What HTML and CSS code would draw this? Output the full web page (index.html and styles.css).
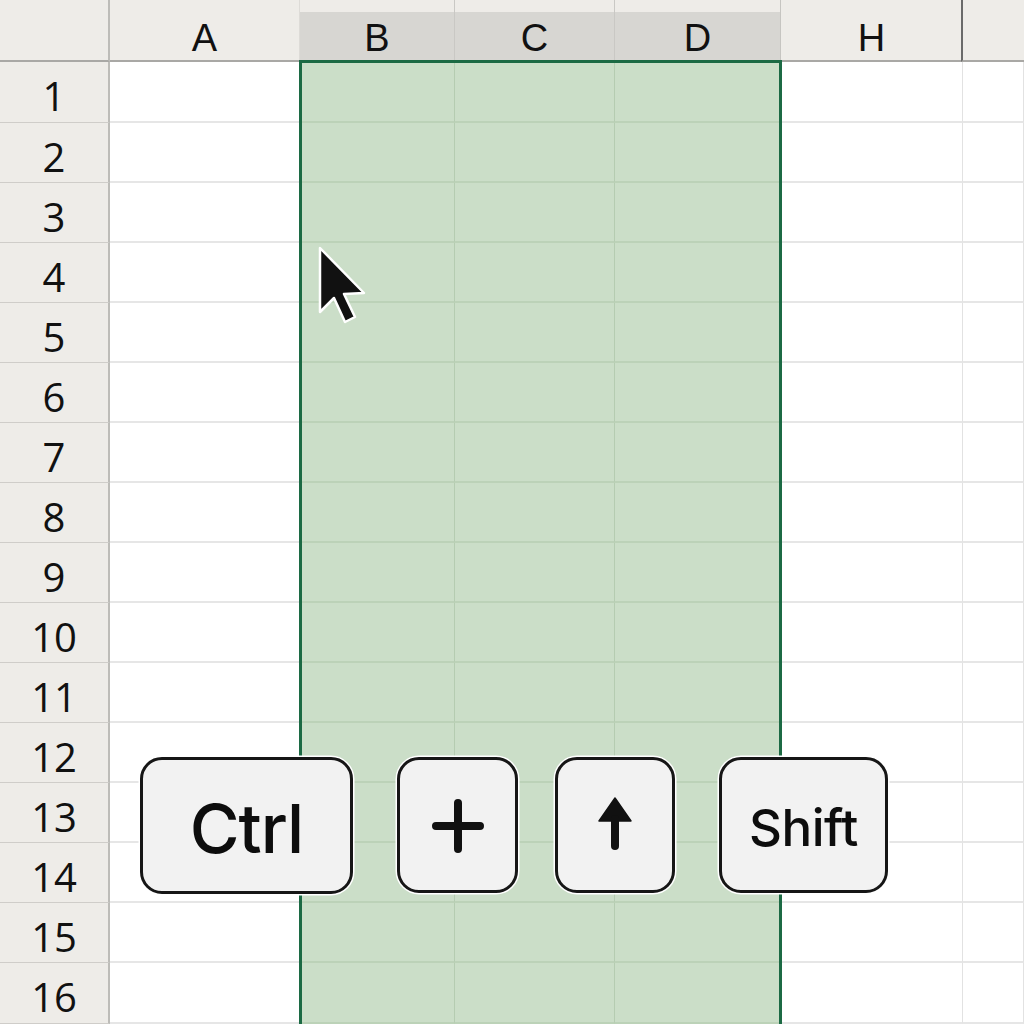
FILE: index.html
```html
<!DOCTYPE html>
<html>
<head>
<meta charset="utf-8">
<link rel="stylesheet" href="styles.css">
</head>
<body>
<div class="page">
  <div class="sheet">
    <div class="hd corner"></div>
    <div class="hd col">A</div>
    <div class="hd col sh">B</div>
    <div class="hd col sh">C</div>
    <div class="hd col sh last-sh">D</div>
    <div class="hd col">H</div>
    <div class="hd col dark"></div>

    <div class="rh first">1</div><div class="c first"></div><div class="c s first"></div><div class="c s first"></div><div class="c s first"></div><div class="c first"></div><div class="c first"></div>
    <div class="rh">2</div><div class="c"></div><div class="c s"></div><div class="c s"></div><div class="c s"></div><div class="c"></div><div class="c"></div>
    <div class="rh">3</div><div class="c"></div><div class="c s"></div><div class="c s"></div><div class="c s"></div><div class="c"></div><div class="c"></div>
    <div class="rh">4</div><div class="c"></div><div class="c s"></div><div class="c s"></div><div class="c s"></div><div class="c"></div><div class="c"></div>
    <div class="rh">5</div><div class="c"></div><div class="c s"></div><div class="c s"></div><div class="c s"></div><div class="c"></div><div class="c"></div>
    <div class="rh">6</div><div class="c"></div><div class="c s"></div><div class="c s"></div><div class="c s"></div><div class="c"></div><div class="c"></div>
    <div class="rh">7</div><div class="c"></div><div class="c s"></div><div class="c s"></div><div class="c s"></div><div class="c"></div><div class="c"></div>
    <div class="rh">8</div><div class="c"></div><div class="c s"></div><div class="c s"></div><div class="c s"></div><div class="c"></div><div class="c"></div>
    <div class="rh">9</div><div class="c"></div><div class="c s"></div><div class="c s"></div><div class="c s"></div><div class="c"></div><div class="c"></div>
    <div class="rh">10</div><div class="c"></div><div class="c s"></div><div class="c s"></div><div class="c s"></div><div class="c"></div><div class="c"></div>
    <div class="rh">11</div><div class="c"></div><div class="c s"></div><div class="c s"></div><div class="c s"></div><div class="c"></div><div class="c"></div>
    <div class="rh">12</div><div class="c"></div><div class="c s"></div><div class="c s"></div><div class="c s"></div><div class="c"></div><div class="c"></div>
    <div class="rh">13</div><div class="c"></div><div class="c s"></div><div class="c s"></div><div class="c s"></div><div class="c"></div><div class="c"></div>
    <div class="rh">14</div><div class="c"></div><div class="c s"></div><div class="c s"></div><div class="c s"></div><div class="c"></div><div class="c"></div>
    <div class="rh">15</div><div class="c"></div><div class="c s"></div><div class="c s"></div><div class="c s"></div><div class="c"></div><div class="c"></div>
    <div class="rh">16</div><div class="c"></div><div class="c s"></div><div class="c s"></div><div class="c s"></div><div class="c"></div><div class="c"></div>
  </div>

  <div class="selection"></div>

  <svg class="cursor" width="60" height="90" viewBox="0 0 60 90">
    <path d="M10 8 L10 72 L24 58 L35 82 L45 77 L34 54 L54 53 Z" fill="#111" stroke="#fff" stroke-width="2.5" stroke-linejoin="round"/>
  </svg>

  <div class="keys">
    <div class="key ctrl">Ctrl</div>
    <div class="key sq plus">
      <svg width="60" height="60" viewBox="0 0 60 60"><path d="M30 8 V54 M8 31 H52" stroke="#111" stroke-width="8" stroke-linecap="round" fill="none"/></svg>
    </div>
    <div class="key sq up">
      <svg width="50" height="60" viewBox="0 0 50 60"><path d="M25 3 L41 26 L9 26 Z" fill="#111" stroke="#111" stroke-width="1.5" stroke-linejoin="round"/><path d="M25 24 V51" stroke="#111" stroke-width="8" stroke-linecap="round"/></svg>
    </div>
    <div class="key shift">Shift</div>
  </div>
</div>
</body>
</html>
```

FILE: styles.css
```css
html, body {
  margin: 0;
  padding: 0;
  background: #ffffff;
}
.page {
  position: relative;
  width: 1024px;
  height: 1024px;
  overflow: hidden;
  font-family: "Open Sans", "Liberation Sans", sans-serif;
  color: #111;
}
.sheet {
  display: grid;
  grid-template-columns: 110px 190px 155px 160px 166px 182px 61px;
  grid-template-rows: 62px 61px repeat(14, 60px) 61px;
}
.hd {
  background: #eeece8;
  border-bottom: 2px solid #a9a8a5;
  box-sizing: border-box;
}
.corner {
  border-right: 2px solid #bdbcb8;
}
.col {
  display: flex;
  align-items: center;
  justify-content: center;
  padding-top: 16px;
  font-family: "Liberation Sans", "Open Sans", sans-serif;
  font-size: 38px;
  line-height: 44px;
  border-right: 1px solid #dddbd7;
}
.col.sh {
  background: linear-gradient(#eeece8 0 12px, #d7d6d2 12px);
  border-right: 1px solid #c9c8c4;
}
.col.last-sh {
  border-right: 1px solid #c6c5c1;
}
.col.dark {
  border-left: 2px solid #6a6a6a;
  border-right: none;
  margin-left: -2px;
}
.rh {
  background: #eeece8;
  border-right: 2px solid #bdbcb8;
  border-bottom: 1px solid #cfcdc9;
  box-sizing: border-box;
  display: flex;
  align-items: center;
  justify-content: center;
  padding-top: 8px;
  font-size: 40px;
  line-height: 1;
}
.c {
  border-right: 1px solid #e2e2e2;
  border-bottom: 2px solid #e6e6e6;
  box-sizing: border-box;
}
.c.s {
  background: #cbdec8;
  border-right: 1px solid #b5ccb1;
  border-bottom: 2px solid #bcd2b8;
}
.selection {
  position: absolute;
  left: 299px;
  top: 60px;
  width: 483px;
  height: 980px;
  border: 3px solid #1c6a44;
  box-sizing: border-box;
}
.cursor {
  position: absolute;
  left: 310px;
  top: 240px;
}
.keys {
  position: absolute;
  left: 140px;
  top: 757px;
  display: flex;
  align-items: flex-start;
}
.key {
  box-sizing: border-box;
  height: 137px;
  background: #f2f2f2;
  border: 3px solid #161616;
  border-radius: 22px;
  box-shadow: 0 0 0 1.5px #ffffff;
  display: flex;
  align-items: center;
  justify-content: center;
  font-family: Inter, "Liberation Sans", Arial, sans-serif;
  font-weight: 500;
  color: #0d0d0d;
}
.ctrl {
  width: 213px;
  font-size: 68px;
  letter-spacing: -1px;
  padding-top: 4px;
}
.sq {
  width: 121px;
  height: 136px;
}
.plus {
  margin-left: 44px;
}
.up {
  margin-left: 37px;
  width: 120px;
}
.shift {
  width: 169px;
  height: 136px;
  margin-left: 44px;
  font-size: 51px;
  letter-spacing: -0.5px;
  padding-top: 4px;
}
```
